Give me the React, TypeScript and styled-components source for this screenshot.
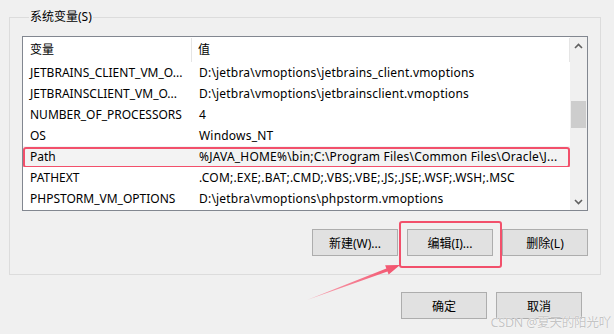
import React from 'react';
import styled, { createGlobalStyle } from 'styled-components';

const GlobalStyle = createGlobalStyle`
  html, body {
    margin: 0;
    padding: 0;
    background: #f0f0f0;
  }
  * {
    box-sizing: border-box;
  }
`;

const FONT = `"Microsoft YaHei UI", "Noto Sans", "Noto Sans CJK SC", sans-serif`;
const RED = '#f2506b';

const Window = styled.div`
  position: relative;
  width: 614px;
  height: 334px;
  padding: 10px 13px 0 9px;
  background: #f0f0f0;
  font-family: ${FONT};
  font-size: 12px;
  color: #000;
  overflow: hidden;
`;

const GroupBox = styled.fieldset`
  margin: 0;
  padding: 12px 12px 18px 12px;
  border: 1px solid #dcdcdc;
  min-inline-size: 0;
`;

const GroupTitle = styled.legend`
  margin-left: 7px;
  padding: 0 1px;
  line-height: 14px;
  font-size: 12px;
`;

const ListBox = styled.div`
  display: flex;
  height: 175px;
  border: 1px solid #828790;
  background: #fff;
`;

const Table = styled.div`
  flex: 1;
  display: flex;
  flex-direction: column;
  min-width: 0;
`;

const HeaderRow = styled.div`
  display: flex;
  height: 25px;
  padding-top: 1px;
`;

const HeaderCell = styled.div<{ $width?: number }>`
  ${(p) => (p.$width ? `width: ${p.$width}px;` : 'flex: 1;')}
  padding-left: ${(p) => (p.$width ? 7 : 6)}px;
  border-right: 1px solid #e5e5e5;
  line-height: 24px;
`;

const Row = styled.div<{ $selected?: boolean }>`
  position: relative;
  display: flex;
  height: 21px;
  line-height: 21px;
  background: ${(p) => (p.$selected ? '#f3f3f3' : '#fff')};

  ${(p) =>
    p.$selected &&
    `
    &::after {
      content: '';
      position: absolute;
      inset: 1px 0 -1px 0;
      border: 2px solid ${RED};
      border-radius: 3px;
      pointer-events: none;
    }
  `}
`;

const Cell = styled.div<{ $width?: number }>`
  ${(p) => (p.$width ? `width: ${p.$width}px;` : 'flex: 1;')}
  padding-left: 7px;
  white-space: nowrap;
  overflow: hidden;
  letter-spacing: ${(p) => (p.$width ? 0 : 0.2)}px;
`;

const Scrollbar = styled.div`
  width: 17px;
  display: flex;
  flex-direction: column;
  background: #f0f0f0;
`;

const ScrollArrow = styled.div`
  height: 17px;
  display: flex;
  align-items: center;
  justify-content: center;
`;

const ScrollTrack = styled.div`
  flex: 1;
  padding: 0 1px;
`;

const ScrollThumb = styled.div<{ $offset: number; $size: number }>`
  margin-top: ${(p) => p.$offset}px;
  height: ${(p) => p.$size}px;
  background: #cdcdcd;
`;

const ButtonRow = styled.div`
  display: flex;
  justify-content: flex-end;
  gap: 9px;
  margin-top: 18px;
`;

const DialogButtons = styled.div`
  display: flex;
  justify-content: flex-end;
  gap: 9px;
  margin-top: 17px;
  margin-right: 19px;
`;

const Button = styled.button<{ $marked?: boolean }>`
  position: relative;
  width: 86px;
  height: 27px;
  padding: 0;
  background: #e1e1e1;
  border: 1px solid #adadad;
  border-radius: 0;
  font-family: ${FONT};
  font-size: 12px;
  color: #000;

  ${(p) =>
    p.$marked &&
    `
    &::after {
      content: '';
      position: absolute;
      top: -9px;
      left: -9px;
      right: -10px;
      bottom: -13px;
      border: 2px solid ${RED};
      border-radius: 3px;
    }
  `}
`;

const Arrow = styled.svg`
  position: absolute;
  left: 0;
  top: 0;
  pointer-events: none;
`;

const Watermark = styled.div`
  position: absolute;
  right: 3px;
  bottom: 3px;
  font-family: "Noto Sans", "Noto Sans CJK SC", sans-serif;
  font-size: 12.5px;
  color: #c4c4c4;
  text-shadow: 0 0 1px #fff, 0 0 1px #fff;
  letter-spacing: -0.2px;
`;

const Chevron: React.FC<{ down?: boolean }> = ({ down }) => (
  <svg width="9" height="6" viewBox="0 0 9 6">
    <polyline
      points={down ? '1,1 4.5,4.5 8,1' : '1,5 4.5,1.5 8,5'}
      fill="none"
      stroke="#606060"
      strokeWidth="1.6"
    />
  </svg>
);

const variables = [
  { name: 'JETBRAINS_CLIENT_VM_O...', value: 'D:\\jetbra\\vmoptions\\jetbrains_client.vmoptions' },
  { name: 'JETBRAINSCLIENT_VM_O...', value: 'D:\\jetbra\\vmoptions\\jetbrainsclient.vmoptions' },
  { name: 'NUMBER_OF_PROCESSORS', value: '4' },
  { name: 'OS', value: 'Windows_NT' },
  { name: 'Path', value: '%JAVA_HOME%\\bin;C:\\Program Files\\Common Files\\Oracle\\J...', selected: true },
  { name: 'PATHEXT', value: '.COM;.EXE;.BAT;.CMD;.VBS;.VBE;.JS;.JSE;.WSF;.WSH;.MSC' },
  { name: 'PHPSTORM_VM_OPTIONS', value: 'D:\\jetbra\\vmoptions\\phpstorm.vmoptions' },
];

// arrow geometry: tail -> tip, tapering body with a small head
const tail = [307, 300];
const tip = [400, 265];
const dx = tip[0] - tail[0];
const dy = tip[1] - tail[1];
const len = Math.hypot(dx, dy);
const ux = dx / len;
const uy = dy / len;
const nx = -uy;
const ny = ux;
const base = [tip[0] - ux * 14, tip[1] - uy * 14];
const pt = (s: number) => `${base[0] + nx * s},${base[1] + ny * s}`;
const arrowPoints = [
  `${tail[0]},${tail[1]}`,
  pt(1.6),
  pt(5),
  `${tip[0]},${tip[1]}`,
  pt(-5),
  pt(-1.6),
].join(' ');

export default function App() {
  return (
    <>
      <GlobalStyle />
      <Window>
        <GroupBox>
          <GroupTitle>系统变量(S)</GroupTitle>
          <ListBox>
            <Table>
              <HeaderRow>
                <HeaderCell $width={169}>变量</HeaderCell>
                <HeaderCell>值</HeaderCell>
              </HeaderRow>
              {variables.map((v) => (
                <Row key={v.name} $selected={v.selected}>
                  <Cell $width={169}>{v.name}</Cell>
                  <Cell>{v.value}</Cell>
                </Row>
              ))}
            </Table>
            <Scrollbar>
              <ScrollArrow>
                <Chevron />
              </ScrollArrow>
              <ScrollTrack>
                <ScrollThumb $offset={47} $size={27} />
              </ScrollTrack>
              <ScrollArrow>
                <Chevron down />
              </ScrollArrow>
            </Scrollbar>
          </ListBox>
          <ButtonRow>
            <Button>新建(W)...</Button>
            <Button $marked>编辑(I)...</Button>
            <Button>删除(L)</Button>
          </ButtonRow>
        </GroupBox>
        <DialogButtons>
          <Button>确定</Button>
          <Button>取消</Button>
        </DialogButtons>
        <Arrow width="614" height="334" viewBox="0 0 614 334">
          <defs>
            <linearGradient id="arrowFill" x1={tail[0]} y1={tail[1]} x2={tip[0]} y2={tip[1]} gradientUnits="userSpaceOnUse">
              <stop offset="0" stopColor="#f8a9b6" />
              <stop offset="1" stopColor={RED} />
            </linearGradient>
          </defs>
          <polygon points={arrowPoints} fill="url(#arrowFill)" />
        </Arrow>
        <Watermark>CSDN @夏天的阳光吖</Watermark>
      </Window>
    </>
  );
}
